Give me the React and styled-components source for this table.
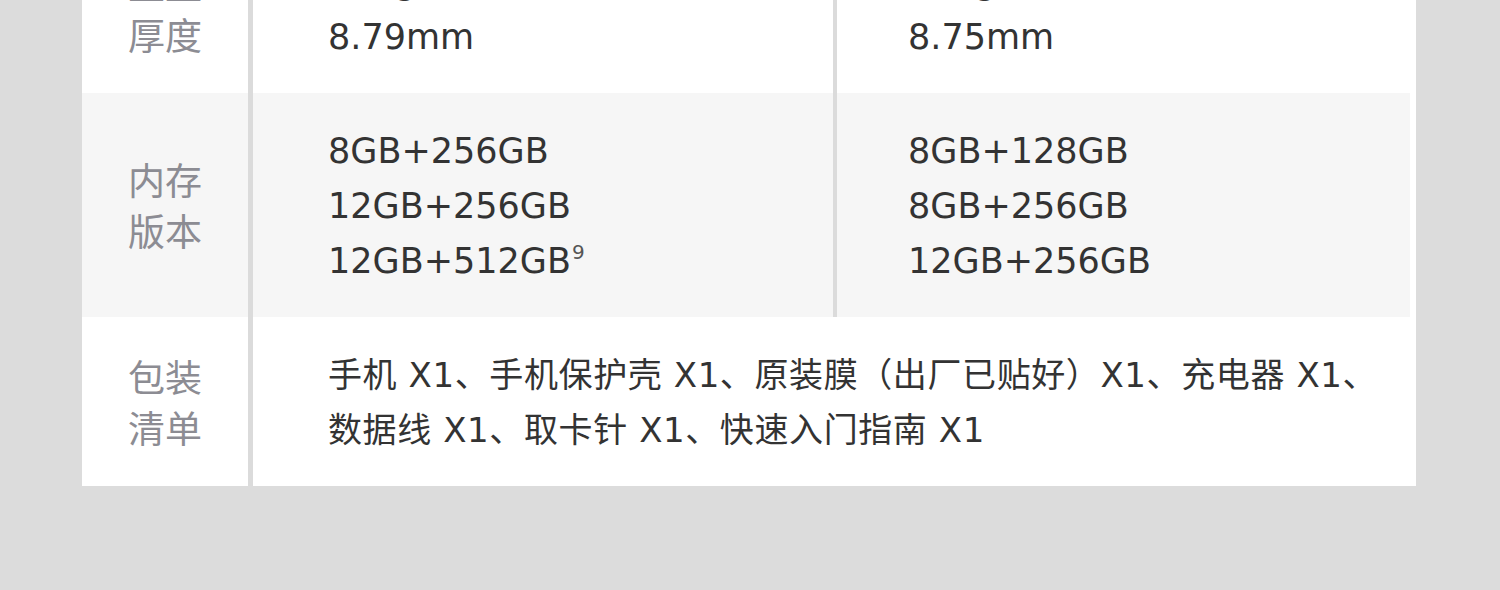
import React from "react";
import styled, { createGlobalStyle } from "styled-components";

const specs = [
  {
    label: ["重量", "厚度"],
    values: [
      ["199g", "8.79mm"],
      ["205g", "8.75mm"],
    ],
  },
  {
    label: ["内存", "版本"],
    shaded: true,
    values: [
      ["8GB+256GB", "12GB+256GB", ["12GB+512GB", "9"]],
      ["8GB+128GB", "8GB+256GB", "12GB+256GB"],
    ],
  },
];

const packing = [
  "手机 X1、手机保护壳 X1、原装膜（出厂已贴好）X1、充电器 X1、",
  "数据线 X1、取卡针 X1、快速入门指南 X1",
];

const App = () => {
  return (
    <Page>
      <GlobalStyle />
      <Table>
        {specs.map((row) => (
          <Row key={row.label.join("")} shaded={row.shaded}>
            <Label>
              {row.label.map((l) => (
                <span key={l}>{l}</span>
              ))}
            </Label>
            <Values>
              {row.values.map((col, i) => (
                <Cell key={i} divided={i > 0}>
                  {col.map((line) =>
                    Array.isArray(line) ? (
                      <Line key={line[0]}>
                        {line[0]}
                        <Note>{line[1]}</Note>
                      </Line>
                    ) : (
                      <Line key={line}>{line}</Line>
                    )
                  )}
                </Cell>
              ))}
            </Values>
          </Row>
        ))}
        <Row>
          <Label>
            <span>包装</span>
            <span>清单</span>
          </Label>
          <Wide>
            {packing.map((line) => (
              <Line key={line}>{line}</Line>
            ))}
          </Wide>
        </Row>
      </Table>
    </Page>
  );
};

export default App;

const GlobalStyle = createGlobalStyle`
  html, body {
    margin: 0;
    padding: 0;
    background: #dcdcdc;
    overflow: hidden;
  }
`;

const Page = styled.div`
  width: 1500px;
  height: 590px;
  padding: 0 84px 0 82px;
  box-sizing: border-box;
`;

const Table = styled.div`
  margin-top: -76px;
  background: #fff;
  padding-right: 6px;
  display: flex;
  flex-direction: column;
`;

const Row = styled.div`
  display: grid;
  grid-template-columns: 171px 1fr;
  background: ${(p) => (p.shaded ? "#f6f6f6" : "#fff")};
`;

const Label = styled.div`
  display: flex;
  flex-direction: column;
  align-items: center;
  justify-content: center;
  border-right: 5px solid #dbdbdb;
  font-family: "Noto Sans CJK SC", sans-serif;
  font-size: 37px;
  line-height: 51px;
  color: #8c8c93;
`;

const Values = styled.div`
  display: grid;
  grid-template-columns: 580px 1fr;
`;

const Cell = styled.div`
  display: flex;
  flex-direction: column;
  padding: 31px 20px 28px ${(p) => (p.divided ? "71px" : "75px")};
  border-left: ${(p) => (p.divided ? "4px solid #dbdbdb" : "none")};
  font-family: "DejaVu Sans", "Noto Sans CJK SC", sans-serif;
  font-size: 35px;
  line-height: 55px;
  color: #333;
`;

const Line = styled.div`
  white-space: nowrap;
`;

const Note = styled.sup`
  font-size: 20px;
  line-height: 0;
  vertical-align: 14px;
  margin-left: 1px;
  color: #555;
`;

const Wide = styled.div`
  display: flex;
  flex-direction: column;
  padding: 31px 20px 28px 75px;
  font-family: "DejaVu Sans", "Noto Sans CJK SC", sans-serif;
  font-size: 34px;
  letter-spacing: 0.6px;
  line-height: 55px;
  color: #333;
`;
